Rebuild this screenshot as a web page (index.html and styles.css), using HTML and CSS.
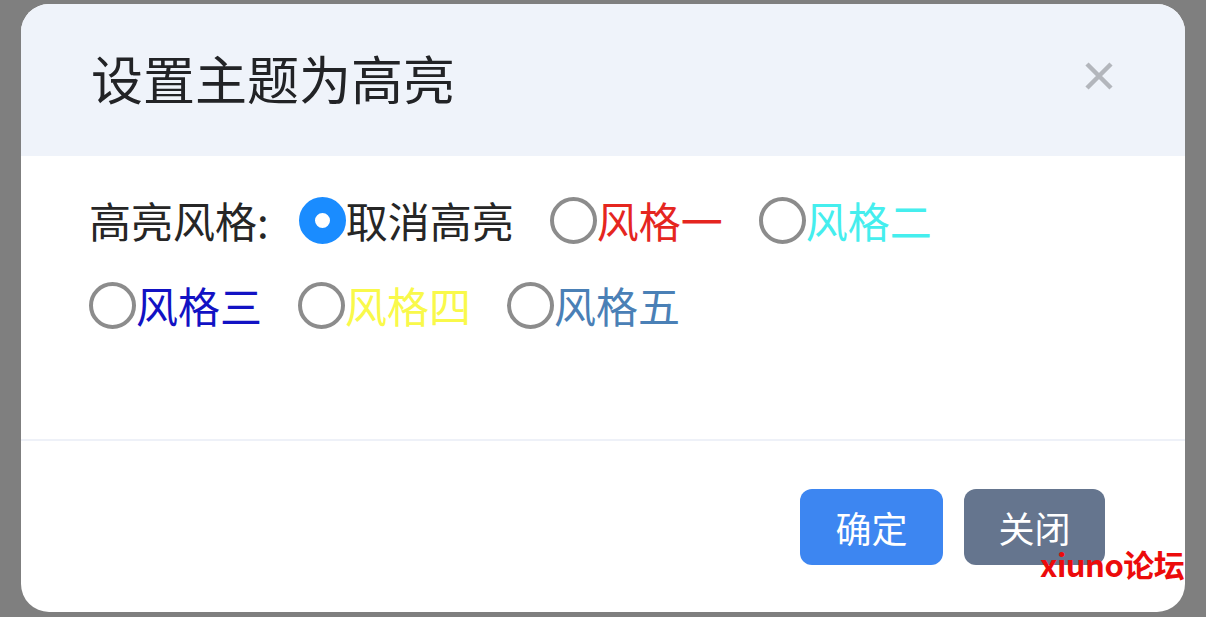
FILE: index.html
```html
<!DOCTYPE html>
<html lang="zh-CN">
<head>
<meta charset="utf-8">
<title>设置主题为高亮</title>
<link rel="stylesheet" href="styles.css">
</head>
<body>
<div class="dialog">
  <div class="dialog-header">
    <div class="dialog-title">设置主题为高亮</div>
    <button class="dialog-close" aria-label="关闭">
      <svg width="28" height="28" viewBox="0 0 28 28"><path d="M2 2 L26 26 M26 2 L2 26" stroke="#b3b6bc" stroke-width="4.5" stroke-linecap="butt" fill="none"/></svg>
    </button>
  </div>
  <div class="dialog-body">
    <div class="radio-group">
      <span class="group-label">高亮风格:</span>
      <label class="radio"><span class="radio-dot checked"></span><span class="radio-text c-default">取消高亮</span></label>
      <label class="radio"><span class="radio-dot"></span><span class="radio-text c-red">风格一</span></label>
      <label class="radio"><span class="radio-dot"></span><span class="radio-text c-aqua">风格二</span></label>
      <label class="radio"><span class="radio-dot"></span><span class="radio-text c-blue">风格三</span></label>
      <label class="radio"><span class="radio-dot"></span><span class="radio-text c-yellow">风格四</span></label>
      <label class="radio"><span class="radio-dot"></span><span class="radio-text c-steel">风格五</span></label>
    </div>
  </div>
  <div class="dialog-footer">
    <button class="btn btn-primary">确定</button>
    <button class="btn btn-secondary">关闭</button>
  </div>
</div>
<div class="watermark">xiuno论坛</div>
</body>
</html>
```
FILE: styles.css
```css
html, body {
  margin: 0;
  padding: 0;
}
body {
  background: #7f7f7f;
  width: 1206px;
  height: 617px;
  overflow: hidden;
  font-family: "Noto Sans CJK SC", "Noto Sans", sans-serif;
  position: relative;
}
.dialog {
  margin: 4px 0 0 21px;
  width: 1164px;
  height: 608px;
  background: #ffffff;
  border-radius: 28px;
  overflow: hidden;
  display: flex;
  flex-direction: column;
}
.dialog-header {
  height: 152px;
  flex: none;
  background: #eff3fa;
  display: flex;
  align-items: center;
  justify-content: space-between;
  padding: 0 72px 0 70px;
}
.dialog-title {
  font-size: 52px;
  line-height: 1;
  color: #222326;
  margin-top: -4px;
}
.dialog-close {
  border: 0;
  background: transparent;
  padding: 0;
  width: 28px;
  height: 28px;
  display: flex;
  margin-top: -8px;
}
.dialog-body {
  height: 285px;
  flex: none;
  box-sizing: border-box;
  padding: 36px 40px 0 68px;
  border-bottom: 2px solid #eef1f8;
}
.radio-group {
  display: flex;
  flex-wrap: wrap;
  row-gap: 29px;
  align-items: center;
}
.group-label {
  font-size: 42px;
  line-height: 56px;
  color: #262626;
  margin-right: 30px;
}
.radio {
  display: flex;
  align-items: center;
  height: 56px;
  margin-right: 36px;
}
.radio-dot {
  width: 47px;
  height: 47px;
  box-sizing: border-box;
  border-radius: 50%;
  border: 4px solid #8c8c8c;
  background: #fff;
  flex: none;
}
.radio-dot.checked {
  border: 16px solid #1a8cff;
  background: #ffffff;
}
.radio-text {
  font-size: 42px;
  line-height: 56px;
}
.c-default { color: #262626; }
.c-red { color: #e5261f; }
.c-aqua { color: #45eeee; }
.c-blue { color: #1212c4; }
.c-yellow { color: #f9f94a; }
.c-steel { color: #4a80b6; }
.dialog-footer {
  flex: 1;
  display: flex;
  justify-content: flex-end;
  align-items: flex-start;
  gap: 21px;
  padding: 48px 80px 0 0;
}
.btn {
  border: 0;
  height: 76px;
  border-radius: 12px;
  color: #ffffff;
  font-family: "Noto Sans CJK SC", sans-serif;
  font-size: 36px;
  line-height: 1;
  padding: 0;
}
.btn-primary {
  width: 143px;
  background: #3d86f1;
}
.btn-secondary {
  width: 141px;
  background: #65758e;
}
.watermark {
  position: absolute;
  left: 1040px;
  top: 544px;
  font-family: "Noto Sans CJK SC", sans-serif;
  font-weight: 700;
  font-size: 31px;
  line-height: 40px;
  color: #ec0b0b;
  letter-spacing: -0.5px;
}
```
